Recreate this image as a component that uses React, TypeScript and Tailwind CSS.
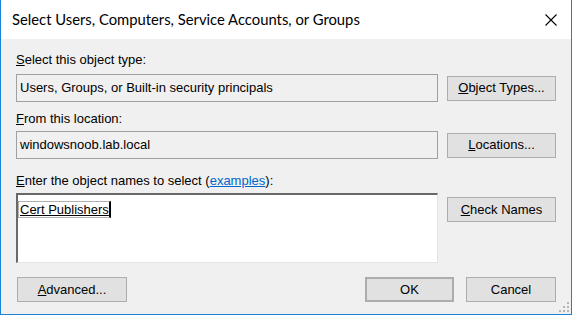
const ui = "font-['Liberation_Sans',Arial,sans-serif] text-[13px] leading-[14px] text-black";

function Btn({ label, k, rest, className = "" }: { label?: string; k: string; rest: string; className?: string }) {
  return (
    <button
      type="button"
      className={`flex h-[25px] items-center justify-center border border-[#adadad] bg-[#e1e1e1] ${ui} ${className}`}
    >
      {label}
      <span className="underline">{k}</span>
      {rest}
    </button>
  );
}

function Label({ k, rest, children }: { k: string; rest: string; children?: React.ReactNode }) {
  return (
    <div className={`h-[14px] pl-[15px] ${ui}`}>
      <span className="underline">{k}</span>
      {rest}
      {children}
    </div>
  );
}

function SizeGrip() {
  const dots = [
    [8, 0],
    [4, 4],
    [8, 4],
    [0, 8],
    [4, 8],
    [8, 8],
  ];
  return (
    <svg width="10" height="10" viewBox="0 0 10 10" className="absolute bottom-[2px] right-[2px]">
      {dots.map(([x, y]) => (
        <rect key={`${x}-${y}`} x={x} y={y} width="2" height="2" fill="#b5b5b5" />
      ))}
    </svg>
  );
}

export default function App() {
  return (
    <div className="relative flex h-[315px] w-[572px] flex-col border-x border-b border-[#1883d7] bg-[#f0f0f0]">
      <div className="flex h-[39px] shrink-0 items-center justify-between bg-white pl-[11px] pr-[14px]">
        <span className="font-['Lato',sans-serif] text-[14.8px] text-black">
          Select Users, Computers, Service Accounts, or Groups
        </span>
        <svg width="12" height="12" viewBox="0 0 12 12">
          <path d="M0.5 0.5 L11.5 11.5 M11.5 0.5 L0.5 11.5" stroke="#000" strokeWidth="1.1" />
        </svg>
      </div>

      <div className="flex flex-col pt-[14px]">
        <Label k="S" rest="elect this object type:" />
        <div className="mt-[7px] flex items-center gap-[9px] pl-[15px]">
          <div className={`flex h-[28px] w-[422px] items-center border border-[#a0a0a0] bg-[#f0f0f0] pl-[3px] ${ui}`}>
            Users, Groups, or Built-in security principals
          </div>
          <Btn k="O" rest="bject Types..." className="w-[109px]" />
        </div>

        <div className="mt-[10px]">
          <Label k="F" rest="rom this location:" />
        </div>
        <div className="mt-[5px] flex items-center gap-[9px] pl-[15px]">
          <div className={`flex h-[28px] w-[422px] items-center border border-[#a0a0a0] bg-[#f0f0f0] pl-[3px] ${ui}`}>
            windowsnoob.lab.local
          </div>
          <Btn k="L" rest="ocations..." className="w-[109px]" />
        </div>

        <div className="mt-[15px]">
          <Label k="E" rest="nter the object names to select (">
            <span className="text-[#0066cc] underline">examples</span>):
          </Label>
        </div>
        <div className="mt-[5px] flex items-start gap-[9px] pl-[15px]">
          <div className="h-[70px] w-[422px] border-2 border-b border-r border-[#a0a0a0] border-b-[#e3e3e3] border-r-[#e3e3e3] border-l-[#696969] border-t-[#696969] bg-white pt-[1px]">
            <span className={`inline-block h-[17px] border border-r-2 border-[#b0b0b0] border-r-black pl-[1px] underline ${ui} leading-[15px]`}>
              Cert Publishers
            </span>
          </div>
          <Btn k="C" rest="heck Names" className="mt-[4px] w-[109px]" />
        </div>

        <div className="mt-[14px] flex items-center pl-[16px]">
          <Btn k="A" rest="dvanced..." className="w-[110px]" />
          <div className="flex-1" />
          <Btn k="" label="OK" rest="" className="w-[89px] border-2 border-[#0078d7]" />
          <Btn k="" label="Cancel" rest="" className="ml-[12px] mr-[15px] w-[90px]" />
        </div>
      </div>
      <SizeGrip />
    </div>
  );
}
